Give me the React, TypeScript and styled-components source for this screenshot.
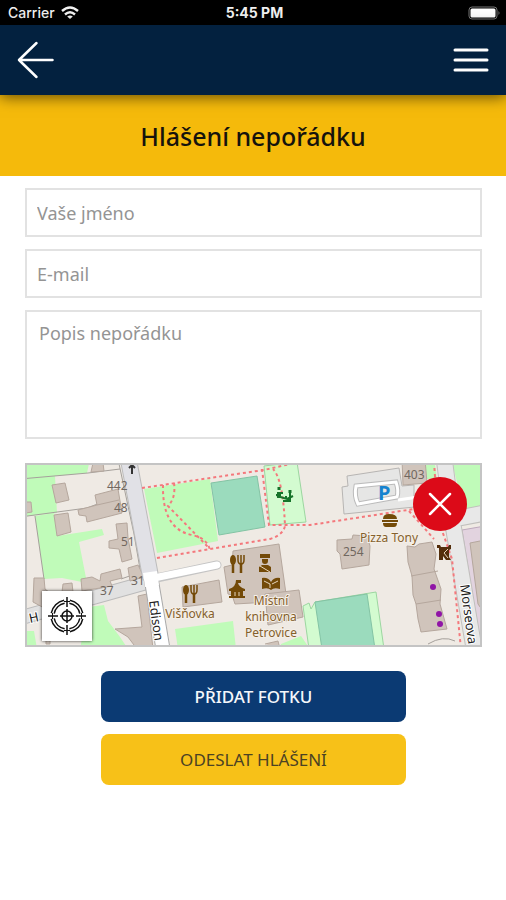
import React from "react";
import styled, { createGlobalStyle } from "styled-components";

const GlobalStyle = createGlobalStyle`
  * { box-sizing: border-box; }
  body { margin: 0; background: #fff; font-family: "Noto Sans", sans-serif; }
`;

const Page = styled.div`
  display: flex;
  flex-direction: column;
  min-height: 100vh;
  background: #fff;
`;

const StatusBar = styled.div`
  display: grid;
  grid-template-columns: 1fr auto 1fr;
  align-items: center;
  height: 25px;
  padding: 0 5px 0 8px;
  background: #000;
  color: #f2f2f2;
  font: 500 14px/24px Inter, sans-serif;
`;

const Carrier = styled.span`
  display: flex;
  align-items: center;
  gap: 6px;
`;

const Clock = styled.span`
  font-weight: 700;
`;

const Battery = styled.svg`
  justify-self: end;
`;

const NavBar = styled.header`
  position: relative;
  z-index: 1;
  display: flex;
  align-items: center;
  justify-content: space-between;
  height: 70px;
  padding: 0 16px;
  background: #03213f;
  box-shadow: 0 2px 14px rgba(0, 0, 0, 0.6);
`;

const IconButton = styled.button`
  display: flex;
  padding: 0;
  border: 0;
  background: none;
  cursor: pointer;
`;

const Banner = styled.div`
  display: flex;
  align-items: center;
  justify-content: center;
  height: 81px;
  background: #f5ba0b;
`;

const Title = styled.h1`
  margin: 0;
  color: #15130d;
  font-size: 25px;
  line-height: 32px;
  font-weight: 500;
`;

const Form = styled.form`
  display: flex;
  flex-direction: column;
  gap: 12px;
  padding: 12px 24px 24px 25px;
`;

const fieldStyle = `
  display: block;
  width: 100%;
  border: 2px solid #e2e2e2;
  border-radius: 0;
  background: #fff;
  color: #333;
  font-family: "Noto Sans", sans-serif;
  font-size: 18px;
  line-height: 24px;
  outline: none;
  &::placeholder { color: #949494; opacity: 1; }
`;

const TextField = styled.input`
  ${fieldStyle}
  height: 49px;
  padding: 0 10px;
`;

const TextArea = styled.textarea`
  ${fieldStyle}
  height: 129px;
  padding: 9px 12px;
  resize: none;
`;

const MapFrame = styled.div`
  position: relative;
  height: 184px;
  margin: 12px 0;
  border: 2px solid #c4c4c4;
  background: #efeae4;
`;

const MapDrawing = styled.svg`
  display: block;
  width: 100%;
  height: 100%;
`;

const LocateButton = styled(IconButton)`
  position: absolute;
  left: 15px;
  bottom: 4px;
  align-items: center;
  justify-content: center;
  width: 50px;
  height: 50px;
  background: #fff;
  box-shadow: 0 0 3px rgba(0, 0, 0, 0.8);
`;

const ClearButton = styled(IconButton)`
  position: absolute;
  top: 12px;
  right: 13px;
  align-items: center;
  justify-content: center;
  width: 54px;
  height: 54px;
  border-radius: 50%;
  background: #dc0a18;
`;

const ActionButton = styled.button<{ $tone: "blue" | "yellow" }>`
  align-self: center;
  width: calc(100% * 2 / 3);
  height: 51px;
  border: 0;
  border-radius: 8px;
  background: ${(p) => (p.$tone === "blue" ? "#0b3a73" : "#f7c118")};
  color: ${(p) => (p.$tone === "blue" ? "#f4f7fb" : "#4b4224")};
  font-family: "Noto Sans", sans-serif;
  font-weight: ${(p) => (p.$tone === "blue" ? 500 : 400)};
  font-size: 17px;
  line-height: 24px;
  cursor: pointer;
`;

const Fork = ({ x, y }: { x: number; y: number }) => (
  <g transform={`translate(${x} ${y})`}>
    <ellipse cx="4" cy="5" rx="3" ry="5" fill="#734a08" />
    <path d="M4 8V18M12 8V18" fill="none" stroke="#734a08" strokeWidth="2.5" />
    <path d="M9 0V5Q9 9 12 9Q15 9 15 5V0M12 0V9" fill="none" stroke="#734a08" strokeWidth="1.5" />
  </g>
);

const StreetMap = () => (
  <MapDrawing viewBox="27 466 453 180" preserveAspectRatio="xMidYMid slice" role="img" aria-label="Mapa">
    <rect x="0" y="440" width="520" height="230" fill="#efeae4" />
    <g fill="#c0fbb9">
      <path d="M20 460H90L87 474L55 477L57 514L20 518Z" />
      <path d="M35 517L54 514L57 537L102 530L104 536L79 543L87 584L62 579L44 580Z" />
      <path d="M88 608L104 606L108 622L120 638L128 650H80Z" />
      <path d="M26 632H34L37 650H20Z" />
      <path d="M144 490L210 480L218 542L157 554Z" />
      <path d="M175 630L233 622L236 650H178Z" />
      <path d="M281 645L301 637L310 650H280Z" />
      <path d="M451 460H485V510L465 514Z" />
      <path d="M424 460H434L437 480H426Z" />
    </g>
    <g fill="#d3fbd0" stroke="#9cd6a0" strokeWidth="1">
      <path d="M264 467L297 463L306 523L270 526Z" />
      <path d="M303 607L309 604L311 610L315 603L376 593L384 650H309Z" />
    </g>
    <g fill="#9bdbbd" stroke="#83c3a4">
      <path d="M211 484L257 477L265 528L219 536Z" />
      <path d="M315 603L367 595L375 650H322Z" />
    </g>
    <path d="M462 531L485 527V650H481Z" fill="#e2d3df" stroke="#bda9bc" />
    <path d="M342 488L348 487L347 477L399 469L402 487L414 486V499L445 494V505L344 515Z" fill="#e6e6e5" stroke="#b7b5b3" />
    <path d="M356 487L396 483Q399 492 397 498L358 505Q354 497 356 487Z" fill="none" stroke="#bbb" strokeWidth="5" />
    <path d="M356 487L396 483Q399 492 397 498L358 505Q354 497 356 487Z" fill="none" stroke="#fff" strokeWidth="3" />
    <path d="M398 501L418 498" stroke="#fff" strokeWidth="3" />
    <g fill="none" stroke="#a5a09b" strokeWidth="1">
      <path d="M20 480L88 474L120 470M20 518L87 509L100 504M35 517L44 580M118 460L134 535L140 570M121 580L144 572" />
      <path d="M428 645Q443 636 455 642" />
    </g>
    <path d="M152 582L20 619" fill="none" stroke="#bbb" strokeWidth="15" />
    <path d="M152 582L20 619" fill="none" stroke="#e1e1e1" strokeWidth="13" />
    <g fill="#d0c4bb" stroke="#b5a79d" strokeWidth="1">
      <path d="M52 486L65 484L69 501L56 504Z" />
      <path d="M93 464H103L104 472L91 473Z" />
      <path d="M54 516L68 514L71 533L57 537Z" />
      <path d="M95 496L118 490L122 514L87 523L86 517L79 516L78 511L97 506Z" />
      <path d="M97 506L119 501" />
      <path d="M116 525L127 524L128 539L132 560L122 563L119 550L109 549V542L118 540Z" />
      <path d="M81 580L92 578L100 582L101 575L120 570L122 579L110 582L112 587L82 592Z" />
      <path d="M128 569L138 566L144 578L130 582Z" />
      <path d="M26 503L31 503L32 513L26 514Z" />
      <path d="M34 579L44 579L45 590L50 594V645H46V610L33 603Z" />
      <path d="M63 585L72 584L73 593H62Z" />
      <path d="M138 597L147 595L153 650H137L128 638L115 630L142 628Z" />
      <path d="M233 552L279 545L287 602L252 604L235 605L232 596L228 595L224 568L232 566Z" />
      <path d="M182 588L219 581L222 603L183 608Z" />
      <path d="M265 595L299 591L303 618L268 626Z" />
      <path d="M337 541L352 540L353 536L367 537L370 547L369 566L342 570L340 555L337 552Z" />
      <path d="M407 547L415 548L419 545L432 543L436 555L434 570L441 590L440 605L447 630L421 633L418 620L416 605L413 596L412 577L408 563Z" />
      <path d="M411 577L438 572M416 605L441 601M265 645L278 642L280 650" />
      <path d="M402 460H425L427 484L403 486Z" />
      <path d="M470 544L485 541V615L478 605Z" />
    </g>
    <path d="M128 458L151 580" fill="none" stroke="#bbb" strokeWidth="17" />
    <path d="M128 458L151 580" fill="none" stroke="#e1e1e6" strokeWidth="15" />
    <path d="M444 458L452 520L475 655M449 521L485 514" fill="none" stroke="#c1c0bd" strokeWidth="17" />
    <path d="M444 458L452 520L475 655M449 521L485 514" fill="none" stroke="#e8e8e8" strokeWidth="15" />
    <path d="M151 579L163 650" stroke="#aaa" strokeWidth="15" />
    <path d="M151 579L163 650" stroke="#fff" strokeWidth="13" />
    <path d="M152 580L217 566" stroke="#c4c4c4" strokeWidth="9" strokeLinecap="round" />
    <path d="M149 580L217 566" stroke="#fff" strokeWidth="7" strokeLinecap="round" />
    <path d="M150 573L152 587" stroke="#fff" strokeWidth="14" />
    <g fill="none" stroke="#f4787c" strokeWidth="2" strokeDasharray="3 3">
      <path d="M142 489L264 471L290 465M262 470L269 526L310 526L414 510L425 518L438 528" />
      <path d="M157 559L270 540Q283 536 285 527Q283 480 273 470" />
      <path d="M163 486Q162 530 192 536Q207 539 210 551M174 484Q176 499 168 507L208 548" />
      <path d="M434 463L438 520L452 560L461 650M409 512L434 540" />
    </g>
    <g fontFamily="Noto Sans, sans-serif" fontSize="12" fill="#70675f">
      <text x="107" y="491">442</text>
      <text x="114" y="513">48</text>
      <text x="121" y="547">51</text>
      <text x="100" y="596">37</text>
      <text x="131" y="586">31</text>
      <text x="343" y="557">254</text>
      <text x="404" y="480">403</text>
    </g>
    <g fontFamily="Noto Sans, sans-serif" fontSize="12" fill="#84602c" stroke="#f5efe7" strokeWidth="2" paintOrder="stroke" textAnchor="middle">
      <text x="190" y="619">Višňovka</text>
      <text x="271" y="606">Místní</text>
      <text x="271" y="622">knihovna</text>
      <text x="271" y="638">Petrovice</text>
      <text x="389" y="543">Pizza Tony</text>
    </g>
    <g fontFamily="Noto Sans, sans-serif" fontSize="13" fill="#222" stroke="#fff" strokeWidth="2" paintOrder="stroke">
      <text transform="translate(149 602) rotate(82)">Edison</text>
      <text transform="translate(460 586) rotate(82)">Morseova</text>
      <text transform="translate(30 624) rotate(-12)">H</text>
    </g>
    <path d="M132 465V475M129 469L132 466L135 469" fill="none" stroke="#333" strokeWidth="2" />
    <text x="378" y="501" fontFamily="Noto Sans, sans-serif" fontSize="20" fontWeight="700" fill="#1683cf">P</text>
    <Fork x={229} y={556} />
    <Fork x={182} y={586} />
    <g fill="#734a08">
      <path d="M260 555H270V559H260ZM262 560H268V562Q268 565 265 565Q262 565 262 562ZM259 573V568L262 566H268L271 568V573Z" />
      <path d="M262 579Q268 578 271 583Q274 578 280 579V590Q274 588 271 591Q268 588 262 590Z" />
      <path d="M229 590Q236 588 236 581H241V584H238Q239 588 245 590V592H229ZM231 592H243V597H245V599H229V597H231Z" />
      <path d="M383 520Q383 515 389 515Q397 515 397 520ZM382 521H398V523H382ZM383 524H397Q397 528 394 528H386Q383 528 383 524Z" />
      <path d="M437 546H440L441 548H448L449 546H451V550L449 551V558L451 561H446L443 557V561H439V549H437Z" fill="#532d0b" />
    </g>
    <path d="M264 582L270 585V589M278 582L272 585M235 593V597M239 593V597M260 567L270 573M448 550L444 554L448 559" fill="none" stroke="#e6d5bd" strokeWidth="1" />
    <g fill="none" stroke="#16732a" strokeWidth="2">
      <path d="M277 497L287 500L293 497M278 499V494H283M290 494V502H287M276 496H281M286 497V502H283" />
      <path d="M279 488V491M290 491V494" strokeWidth="3" />
    </g>
    <g fill="#9015a6">
      <circle cx="433" cy="588" r="3" />
      <circle cx="439" cy="615" r="3" />
      <circle cx="440" cy="625" r="3" />
    </g>
  </MapDrawing>
);

export default function App() {
  return (
    <>
      <GlobalStyle />
      <Page>
        <StatusBar>
          <Carrier>
            Carrier
            <svg width="18" height="14" viewBox="0 0 18 14" fill="none" stroke="#f2f2f2" strokeWidth="2.4">
              <path d="M1 5Q9-2 17 5M4 8.500Q9 4 14 8.500" />
              <path d="M9 13L6.200 10.500Q9 8.500 11.800 10.500Z" fill="#f2f2f2" stroke="none" />
            </svg>
          </Carrier>
          <Clock>5:45 PM</Clock>
          <Battery width="33" height="14" viewBox="0 0 33 14">
            <rect x="1" y="1" width="28" height="12" rx="3" fill="none" stroke="#777" />
            <rect x="2.500" y="2.500" width="25" height="9" rx="1.500" fill="#fff" />
            <path d="M30.500 5Q32.500 7 30.500 9Z" fill="#777" />
          </Battery>
        </StatusBar>
        <NavBar>
          <IconButton type="button" aria-label="Zpět">
            <svg width="38" height="38" viewBox="0 0 38 38" fill="none" stroke="#fff" strokeWidth="2.500" strokeLinecap="round" strokeLinejoin="round">
              <path d="M20.500 2L3 19L20.500 36M3 19H36.500" />
            </svg>
          </IconButton>
          <IconButton type="button" aria-label="Nabídka">
            <svg width="38" height="28" viewBox="0 0 38 28" stroke="#fff" strokeWidth="3" strokeLinecap="round">
              <path d="M3 4H35M3 14H35M3 24H35" />
            </svg>
          </IconButton>
        </NavBar>
        <Banner>
          <Title>Hlášení nepořádku</Title>
        </Banner>
        <Form>
          <TextField type="text" aria-label="Vaše jméno" placeholder="Vaše jméno" />
          <TextField type="email" aria-label="E-mail" placeholder="E-mail" />
          <TextArea aria-label="Popis nepořádku" placeholder="Popis nepořádku" />
          <MapFrame>
            <StreetMap />
            <LocateButton type="button" aria-label="Moje poloha">
              <svg width="38" height="38" viewBox="0 0 38 38" fill="none" stroke="#111">
                <g strokeWidth="1.500">
                  <circle cx="19" cy="19" r="16" pathLength="100" strokeDasharray="19 6" strokeDashoffset="-3" />
                  <circle cx="19" cy="19" r="13" pathLength="100" strokeDasharray="19 6" strokeDashoffset="-3" />
                  <circle cx="19" cy="19" r="5" />
                  <path d="M19 0V10M19 28V38M0 19H10M28 19H38M19 12V26M12 19H26" />
                </g>
                <path d="M16 4.500H22M16 33.500H22M4.500 16V22M33.500 16V22" strokeWidth="1" />
              </svg>
            </LocateButton>
            <ClearButton type="button" aria-label="Zrušit polohu">
              <svg width="26" height="26" viewBox="0 0 26 26" stroke="#fff" strokeWidth="2.500" strokeLinecap="round">
                <path d="M3 3L23 23M23 3L3 23" />
              </svg>
            </ClearButton>
          </MapFrame>
          <ActionButton type="button" $tone="blue">PŘIDAT FOTKU</ActionButton>
          <ActionButton type="submit" $tone="yellow">ODESLAT HLÁŠENÍ</ActionButton>
        </Form>
      </Page>
    </>
  );
}
